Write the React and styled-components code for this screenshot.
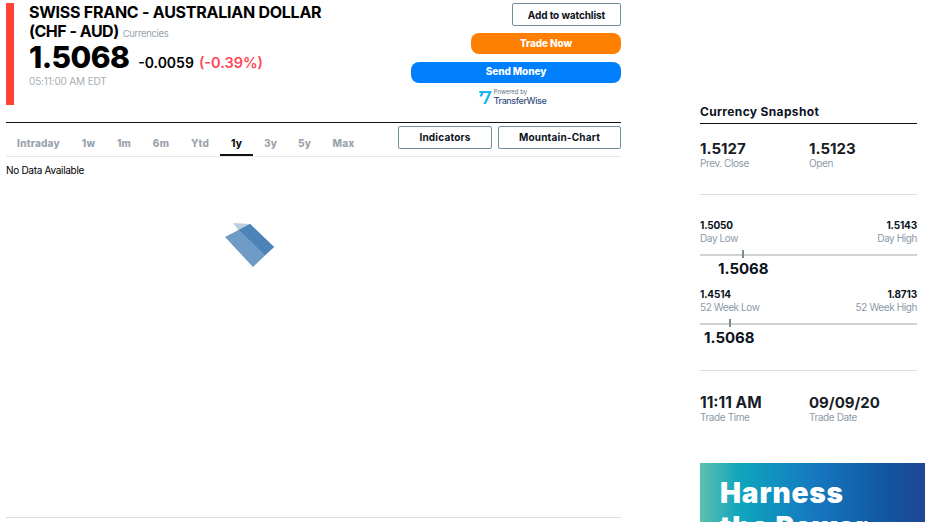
import React from 'react';
import styled, { createGlobalStyle } from 'styled-components';

const GlobalStyle = createGlobalStyle`
  html, body {
    margin: 0;
    padding: 0;
    background: #fff;
    overflow: hidden;
  }
  body {
    font-family: Inter, "Liberation Sans", sans-serif;
    color: #000;
  }
`;

const Page = styled.div`
  display: flex;
  width: 936px;
  height: 522px;
  overflow: hidden;
`;

const Main = styled.div`
  width: 615px;
  margin-left: 6px;
  flex: none;
  display: flex;
  flex-direction: column;
`;

const Header = styled.div`
  display: flex;
  justify-content: space-between;
  height: 123px;
  padding-top: 3px;
  box-sizing: border-box;
  border-bottom: 1px solid #111;
`;

const Quote = styled.div`
  border-left: 8px solid #ff4136;
  height: 102px;
  padding-left: 15px;
`;

const Title = styled.h1`
  margin: 0;
  width: 310px;
  font-size: 16px;
  line-height: 19px;
  font-weight: 700;
  letter-spacing: -0.25px;
`;

const TitleCode = styled.span`
  letter-spacing: -0.5px;
`;

const Category = styled.span`
  font-size: 9.5px;
  font-weight: 400;
  color: #98a2ab;
  margin-left: 4px;
  letter-spacing: -0.35px;
`;

const PriceRow = styled.div`
  display: flex;
  align-items: baseline;
  height: 30px;
  line-height: 30px;
  margin-top: -1px;
`;

const Price = styled.span`
  font-size: 30px;
  font-weight: 800;
  letter-spacing: -0.6px;
  margin-right: 9px;
`;

const Change = styled.span`
  font-size: 14px;
  font-weight: 600;
  margin-right: 5px;
`;

const Percent = styled.span`
  font-size: 14.5px;
  font-weight: 600;
  color: #ff4757;
`;

const QuoteTime = styled.div`
  font-size: 10px;
  line-height: 14px;
  margin-top: 2px;
  color: #a6aeb5;
  letter-spacing: -0.15px;
`;

const Actions = styled.div`
  display: flex;
  flex-direction: column;
  align-items: flex-end;
  width: 210px;
`;

const OutlineButton = styled.div`
  box-sizing: border-box;
  display: flex;
  align-items: center;
  justify-content: center;
  height: 23px;
  width: ${p => p.$width}px;
  padding-bottom: ${p => p.$lift || 0}px;
  border: 1px solid #6f8f99;
  border-radius: 2px;
  font-size: 10px;
  font-weight: 700;
  color: #0b1220;
  background: #fff;
  letter-spacing: ${p => p.$spacing || 0}px;
`;

const PillButton = styled.div`
  box-sizing: border-box;
  display: flex;
  align-items: center;
  justify-content: center;
  width: ${p => p.$width}px;
  height: 21px;
  padding-bottom: ${p => p.$lift}px;
  margin-top: ${p => p.$top}px;
  border-radius: 8px;
  background: ${p => p.$color};
  color: #fff;
  font-size: 10px;
  font-weight: 800;
  letter-spacing: -0.1px;
`;

const Partner = styled.div`
  display: flex;
  align-items: center;
  gap: 1px;
  align-self: center;
  margin-top: 5px;
  margin-right: 8px;
`;

const PartnerText = styled.div`
  display: flex;
  flex-direction: column;
`;

const PoweredBy = styled.span`
  font-size: 6px;
  line-height: 7px;
  color: #5c6f82;
`;

const PartnerName = styled.span`
  font-size: 9px;
  line-height: 11px;
  font-weight: 500;
  color: #37517e;
  letter-spacing: -0.4px;
`;

const Toolbar = styled.div`
  display: flex;
  justify-content: space-between;
  align-items: flex-start;
  height: 34px;
  box-sizing: border-box;
  border-bottom: 1px solid #e8e8e8;
`;

const Tabs = styled.div`
  display: flex;
  height: 33px;
`;

const Tab = styled.div`
  box-sizing: border-box;
  width: ${p => p.$width}px;
  height: 33px;
  padding-top: 14px;
  text-align: center;
  font-size: 10px;
  line-height: 13px;
  font-weight: 800;
  letter-spacing: 0.2px;
  color: ${p => (p.$active ? '#111' : '#9aa4ad')};
  border-bottom: ${p => (p.$active ? '2px solid #111' : 'none')};
`;

const ChartButtons = styled.div`
  display: flex;
  gap: 6px;
  padding-top: 3px;
`;

const ChartArea = styled.div`
  flex: 1;
  border-bottom: 1px solid #ddd;
  margin-bottom: 4px;
`;

const NoData = styled.div`
  font-size: 10px;
  line-height: 13px;
  margin-top: 7px;
  letter-spacing: -0.3px;
`;

const Loader = styled.svg`
  display: block;
  margin: 46px 0 0 218px;
`;

const Side = styled.aside`
  width: 217px;
  margin-left: 79px;
  flex: none;
  padding-top: 105px;
`;

const SideTitle = styled.h2`
  margin: 0;
  font-size: 12px;
  line-height: 14px;
  font-weight: 700;
  letter-spacing: 0.35px;
  padding-bottom: 4px;
  border-bottom: 1px solid #111;
  color: #0b1220;
`;

const StatPair = styled.div`
  display: grid;
  grid-template-columns: 109px 1fr;
  padding-top: ${p => p.$top}px;
  padding-bottom: ${p => p.$bottom}px;
  border-bottom: ${p => (p.$line ? '1px solid #ddd' : 'none')};
`;

const StatValue = styled.div`
  font-size: ${p => p.$size || 15}px;
  line-height: 16px;
  font-weight: 700;
  color: #171c26;
`;

const StatLabel = styled.div`
  font-size: 10px;
  line-height: 12px;
  color: #8c9aa8;
  letter-spacing: -0.4px;
`;

const Ranges = styled.div`
  padding-top: 23px;
  padding-bottom: 24px;
  border-bottom: 1px solid #ddd;
`;

const Range = styled.div`
  margin-bottom: ${p => p.$bottom || 0}px;
`;

const RangeEnds = styled.div`
  display: flex;
  justify-content: space-between;
`;

const RangeEnd = styled.div`
  text-align: ${p => p.$align || 'left'};
`;

const RangeValue = styled.div`
  font-size: 10px;
  line-height: 14px;
  font-weight: 700;
  color: #0b1220;
  letter-spacing: -0.15px;
`;

const Track = styled.div`
  position: relative;
  height: 2px;
  margin-top: 10px;
  background: #cfd3d3;
`;

const Tick = styled.div`
  position: absolute;
  top: -4px;
  width: 2px;
  height: 8px;
  background: #7d8a8e;
`;

const Current = styled.div`
  font-size: 15px;
  line-height: 16px;
  font-weight: 700;
  margin-top: 5px;
  color: #0b1220;
`;

const Banner = styled.div`
  width: 225px;
  height: 59px;
  margin-top: 40px;
  padding: 13px 0 0 20px;
  box-sizing: border-box;
  overflow: hidden;
  background: linear-gradient(90deg, #5dbfae 0%, #0ea5bd 18%, #1579c0 50%, #12549e 85%, #1f4696 100%);
  color: #fff;
  font-size: 28px;
  line-height: 34px;
  font-weight: 900;
  letter-spacing: 0.85px;
`;

const periods = [
  ['Intraday', 65],
  ['1w', 35],
  ['1m', 36],
  ['6m', 38],
  ['Ytd', 40],
  ['1y', 33],
  ['3y', 35],
  ['5y', 33],
  ['Max', 45],
];

const ranges = [
  { low: '1.5050', lowLabel: 'Day Low', high: '1.5143', highLabel: 'Day High', tick: 42, current: 18, bottom: 10 },
  { low: '1.4514', lowLabel: '52 Week Low', high: '1.8713', highLabel: '52 Week High', tick: 29, current: 4 },
];

const App = () => (
  <Page>
    <GlobalStyle />
    <Main>
      <Header>
        <Quote>
          <Title>
            SWISS FRANC - AUSTRALIAN DOLLAR <TitleCode>(CHF - AUD)</TitleCode>
            <Category>Currencies</Category>
          </Title>
          <PriceRow>
            <Price>1.5068</Price>
            <Change>-0.0059</Change>
            <Percent>(-0.39%)</Percent>
          </PriceRow>
          <QuoteTime>05:11:00 AM EDT</QuoteTime>
        </Quote>
        <Actions>
          <OutlineButton $width={109} $spacing={-0.1}>Add to watchlist</OutlineButton>
          <PillButton $width={150} $color="#ff8000" $top={7} $lift={2}>Trade Now</PillButton>
          <PillButton $width={210} $color="#0080ff" $top={8} $lift={3}>Send Money</PillButton>
          <Partner>
            <svg width="15" height="17" viewBox="0 0 15 17">
              <path d="M1 2 H14 L8 15 H5.5 L10.5 4 H5.5 L4 7.5 H1.5 L3 4 H1.5 Z" fill="#1eb6ef" />
            </svg>
            <PartnerText>
              <PoweredBy>Powered by</PoweredBy>
              <PartnerName>TransferWise</PartnerName>
            </PartnerText>
          </Partner>
        </Actions>
      </Header>
      <Toolbar>
        <Tabs>
          {periods.map(([label, width]) => (
            <Tab key={label} $width={width} $active={label === '1y'}>{label}</Tab>
          ))}
        </Tabs>
        <ChartButtons>
          <OutlineButton $width={94} $spacing={0.2} $lift={2}>Indicators</OutlineButton>
          <OutlineButton $width={123} $spacing={0.2} $lift={2}>Mountain-Chart</OutlineButton>
        </ChartButtons>
      </Toolbar>
      <ChartArea>
        <NoData>No Data Available</NoData>
        <Loader width="52" height="46" viewBox="0 0 52 46">
          <polygon points="9,0 26,1 15,8" fill="#bcd0e2" />
          <polygon points="1,14 26,1 50,24 29,44" fill="#6f9cc6" />
          <polygon points="15,7 26,1 50,24 41,32" fill="#4c83b8" />
        </Loader>
      </ChartArea>
    </Main>
    <Side>
      <SideTitle>Currency Snapshot</SideTitle>
      <StatPair $top={17} $bottom={25} $line>
        <div>
          <StatValue>1.5127</StatValue>
          <StatLabel>Prev. Close</StatLabel>
        </div>
        <div>
          <StatValue>1.5123</StatValue>
          <StatLabel>Open</StatLabel>
        </div>
      </StatPair>
      <Ranges>
        {ranges.map(range => (
          <Range key={range.low} $bottom={range.bottom}>
            <RangeEnds>
              <RangeEnd>
                <RangeValue>{range.low}</RangeValue>
                <StatLabel>{range.lowLabel}</StatLabel>
              </RangeEnd>
              <RangeEnd $align="right">
                <RangeValue>{range.high}</RangeValue>
                <StatLabel>{range.highLabel}</StatLabel>
              </RangeEnd>
            </RangeEnds>
            <Track>
              <Tick style={{ left: range.tick }} />
            </Track>
            <Current style={{ marginLeft: range.current }}>1.5068</Current>
          </Range>
        ))}
      </Ranges>
      <StatPair $top={24} $bottom={0}>
        <div>
          <StatValue $size={15.5}>11:11 AM</StatValue>
          <StatLabel>Trade Time</StatLabel>
        </div>
        <div>
          <StatValue>09/09/20</StatValue>
          <StatLabel>Trade Date</StatLabel>
        </div>
      </StatPair>
      <Banner>Harness<br />the Power</Banner>
    </Side>
  </Page>
);

export default App;
